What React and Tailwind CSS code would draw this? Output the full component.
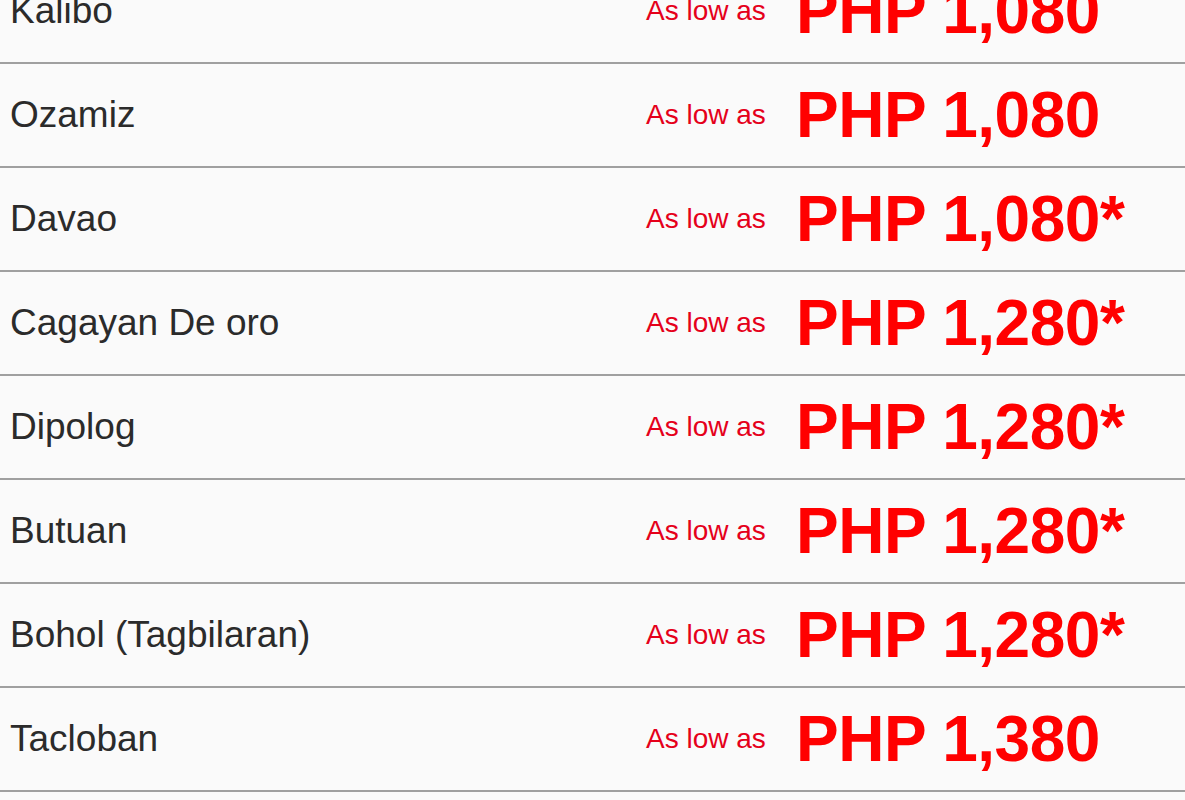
const ROUTES = [
  { city: "Kalibo", price: "PHP 1,080" },
  { city: "Ozamiz", price: "PHP 1,080" },
  { city: "Davao", price: "PHP 1,080*" },
  { city: "Cagayan De oro", price: "PHP 1,280*" },
  { city: "Dipolog", price: "PHP 1,280*" },
  { city: "Butuan", price: "PHP 1,280*" },
  { city: "Bohol (Tagbilaran)", price: "PHP 1,280*" },
  { city: "Tacloban", price: "PHP 1,380" },
];

export default function App() {
  return (
    <div
      className="h-[800px] w-full overflow-hidden bg-[#fafafa]"
      style={{ fontFamily: '"Liberation Sans", Arial, sans-serif' }}
    >
      {/* first row is cut off at the top */}
      <div className="-mt-[40px]">
        {ROUTES.map((r) => (
          <div
            key={r.city}
            className="grid h-[104px] grid-cols-[646px_150px_1fr] items-center border-b-2 border-[#a0a0a0]"
          >
            <div className="pl-[10px] text-[37px] text-[#2b2b2b]">{r.city}</div>
            <div className="text-[28px] text-[#e5001a]">As low as</div>
            <div className="text-[64px] font-bold tracking-[-0.5px] text-[#ff0000]">
              {r.price}
            </div>
          </div>
        ))}
      </div>
    </div>
  );
}
